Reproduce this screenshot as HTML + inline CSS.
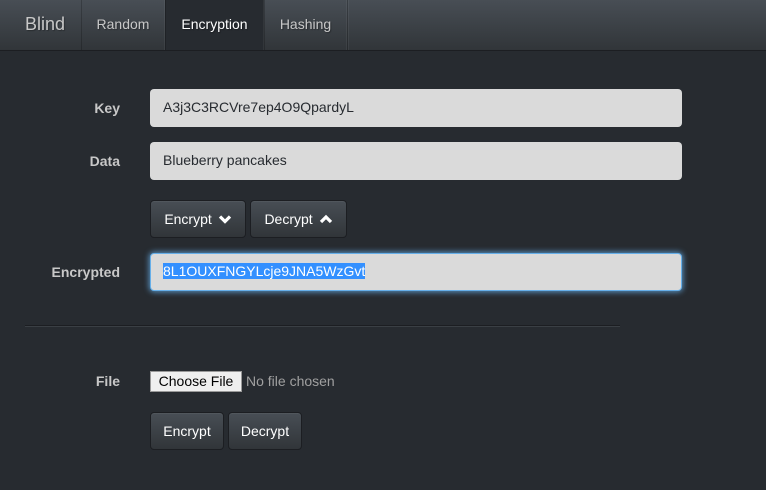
<!DOCTYPE html>
<html><head><style>
*{box-sizing:border-box;margin:0;padding:0}
body{width:766px;height:490px;background:#272b30;font-family:"Liberation Sans",sans-serif;font-size:14px;color:#c8c8c8;position:relative;overflow:hidden}
.nav{position:absolute;left:0;top:0;width:766px;height:51px;background:linear-gradient(#484e55,#3a3f44 60%,#313539);border-bottom:1px solid #1c1e22}
.nav div{position:absolute;top:0;height:50px;line-height:49px;color:#c8c8c8;text-shadow:1px 1px 1px rgba(0,0,0,.3)}
.brand{left:25px;font-size:18px;color:#c8c8c8}
.it{border-left:1px solid rgba(0,0,0,.2);border-right:1px solid rgba(255,255,255,.05);text-align:center}
.lbl{position:absolute;width:120px;text-align:right;font-weight:bold;color:#c8c8c8}
.inp{position:absolute;left:150px;width:532px;height:38px;background:#dadada;border-radius:4px;color:#272b30;padding-left:13px;line-height:37px}
.btn{position:absolute;height:38px;line-height:37px;background:linear-gradient(#484e55,#3a3f44 60%,#313539);border:1px solid #1c1e22;border-radius:4px;color:#fff;text-align:center;box-shadow:0 1px 0 rgba(255,255,255,.05) inset}
</style></head><body>
<div class="nav">
<div class="brand">Blind</div>
<div class="it" style="left:81px;width:84px">Random</div>
<div class="it" style="left:165px;width:99px;background:#272b30;color:#fff">Encryption</div>
<div class="it" style="left:264px;width:83px">Hashing</div>
<div class="it" style="left:347px;width:0"></div>
</div>
<div class="lbl" style="top:100px">Key</div>
<div class="inp" style="top:89px">A3j3C3RCVre7ep4O9QpardyL</div>
<div class="lbl" style="top:153px">Data</div>
<div class="inp" style="top:142px">Blueberry pancakes</div>
<div class="btn" style="left:150px;top:200px;width:96px">Encrypt <svg width="14" height="10" viewBox="0 0 14 10" style="margin-left:2px"><path d="M2 2.5L7 7.5 12 2.5" stroke="#fff" stroke-width="3.2" fill="none"/></svg></div>
<div class="btn" style="left:250px;top:200px;width:97px">Decrypt <svg width="14" height="10" viewBox="0 0 14 10" style="margin-left:2px"><path d="M2 8L7 3 12 8" stroke="#fff" stroke-width="3.2" fill="none"/></svg></div>
<div class="lbl" style="top:264px">Encrypted</div>
<div class="inp" style="top:253px;box-shadow:0 0 6px 1px rgba(102,175,233,.8);border:1px solid #66afe9;line-height:35px;padding-left:12px"><span style="background:#3390ff;color:#fff">8L1OUXFNGYLcje9JNA5WzGvt</span></div>
<div style="position:absolute;left:25px;top:325px;width:595px;border-top:1px solid #1c1e22;border-bottom:1px solid #3a3f44"></div>
<div class="lbl" style="top:373px">File</div>
<div style="position:absolute;left:150px;top:371px;width:92px;height:21px;background:#efefef;border:1px solid #999;color:#000;font-size:14px;line-height:18px;text-align:center">Choose File</div>
<div style="position:absolute;left:246px;top:373px;color:#a0a0a0">No file chosen</div>
<div class="btn" style="left:150px;top:412px;width:74px">Encrypt</div>
<div class="btn" style="left:228px;top:412px;width:74px">Decrypt</div>
</body></html>
